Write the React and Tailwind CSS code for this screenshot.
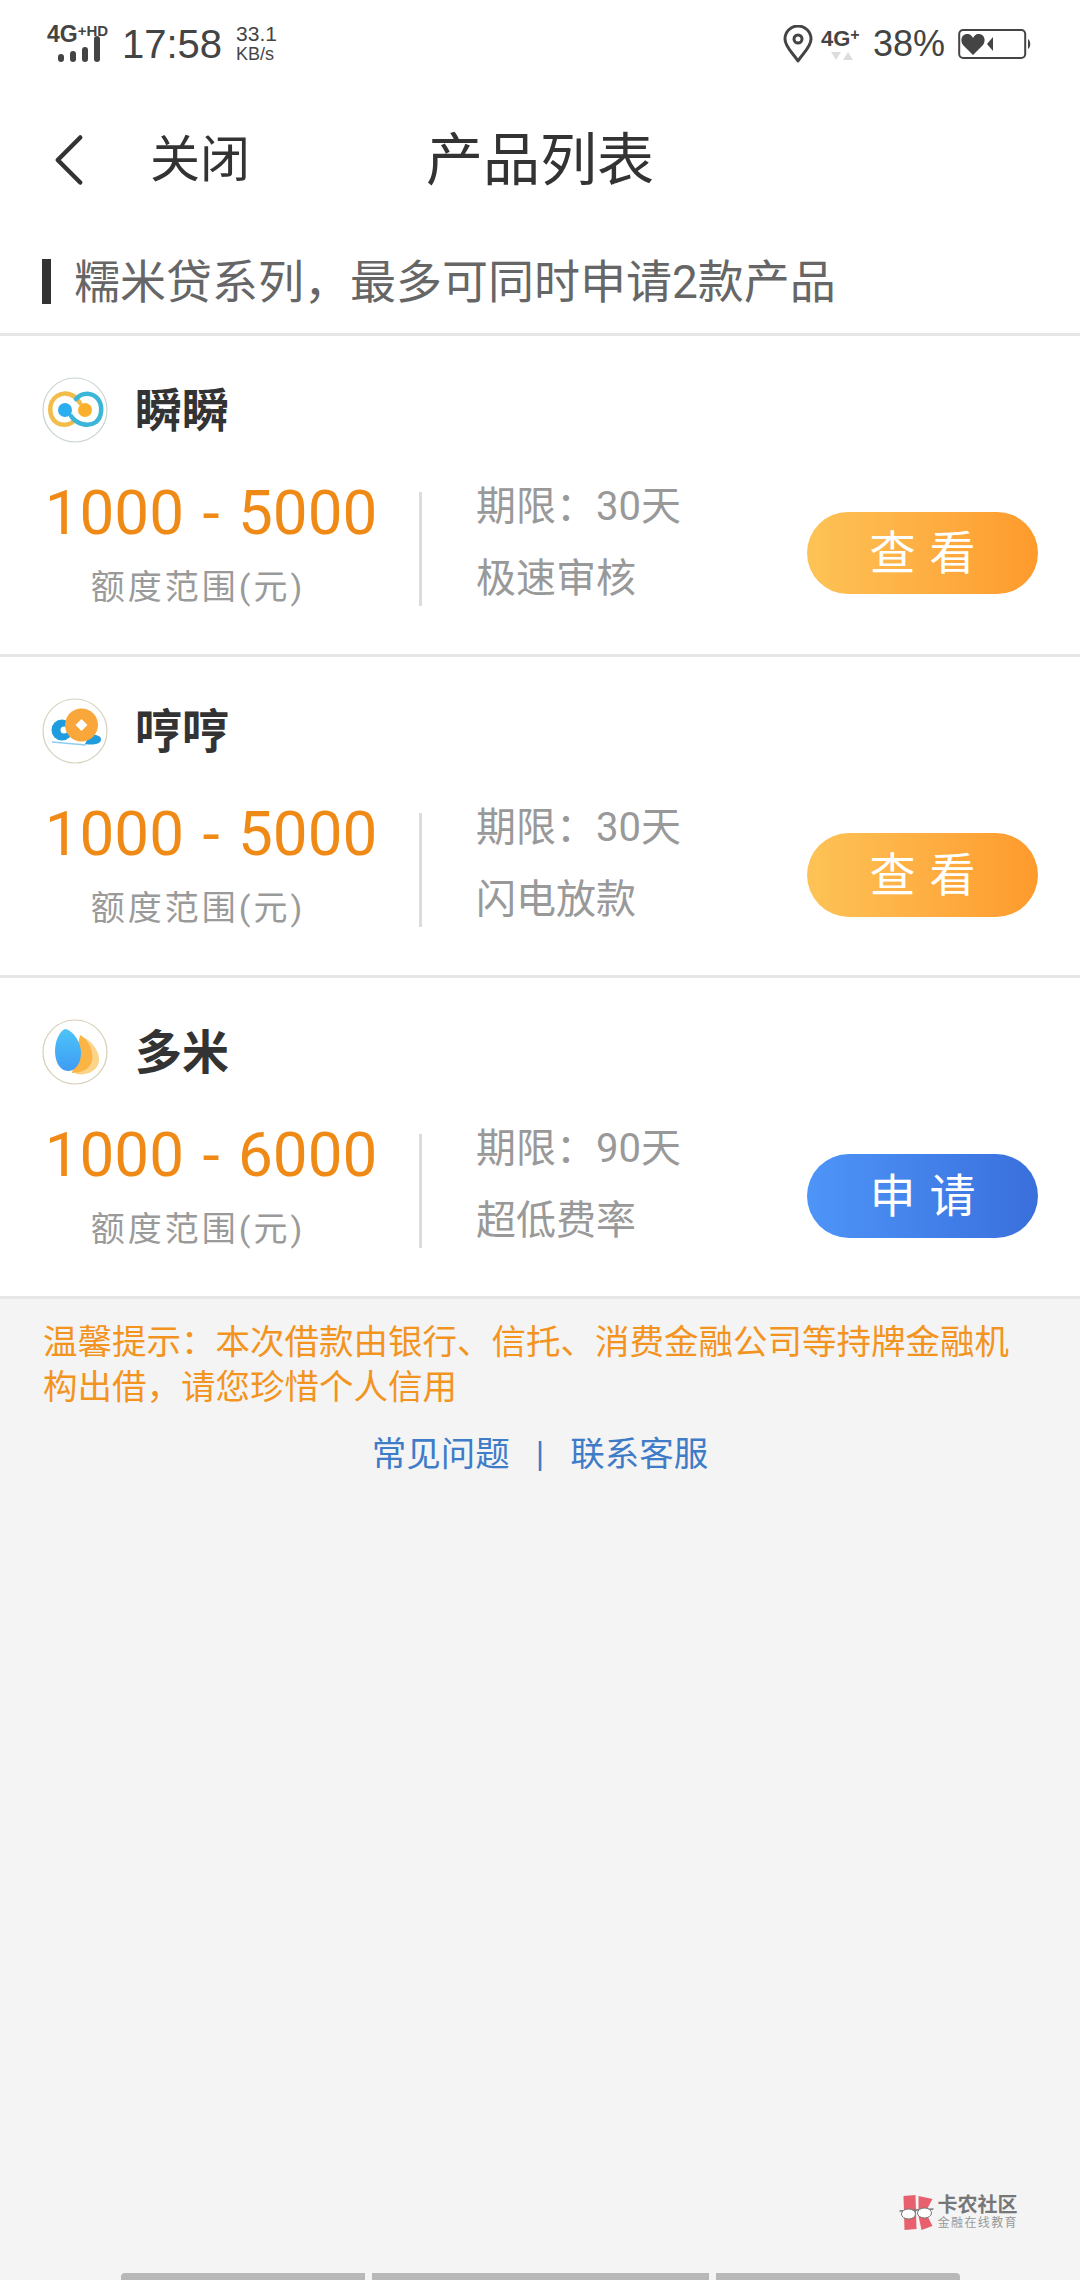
import { ChevronLeft } from 'lucide-react';

const cjk = { fontFamily: '"Roboto", "Noto Sans CJK SC", sans-serif' };

function InfinityIcon() {
    return (
        <svg width="66" height="66" viewBox="0 0 66 66">
            <circle cx="33" cy="33" r="32" fill="#fff" stroke="#c9d6cf" strokeWidth="1.2" />
            <path d="M38 26 C33 17 23 14 15 19 C6 25 6 40 15 46 C21 49 28 48 32 44" fill="none" stroke="#f2bd4b" strokeWidth="4.5" strokeLinecap="round" />
            <path d="M34 22 C40 15 50 15 56 22 C61 29 60 40 54 45 C47 50 35 48 29 39" fill="none" stroke="#3bb6d8" strokeWidth="4.5" strokeLinecap="round" />
            <circle cx="23" cy="33" r="7" fill="#2aaef0" />
            <circle cx="43" cy="33" r="7" fill="#fbb02d" />
        </svg>
    );
}

function CoinIcon() {
    return (
        <svg width="66" height="66" viewBox="0 0 66 66">
            <circle cx="33" cy="33" r="32" fill="#fff" stroke="#d6d2bf" strokeWidth="1.2" />
            <circle cx="20" cy="32" r="10.5" fill="#1f9be0" />
            <circle cx="22" cy="32" r="3.5" fill="#fff" />
            <path d="M47 38 C52 35 60 38 59 42 C58 47 49 47 43 46 Z" fill="#1f9be0" />
            <path d="M10 44 L44 47" stroke="#8fcdf0" strokeWidth="1.5" />
            <circle cx="39.5" cy="27" r="16.5" fill="#f9a63a" />
            <path d="M39.5 21 L45.5 27 L39.5 33 L33.5 27 Z" fill="#fff" />
        </svg>
    );
}

function SeedIcon() {
    return (
        <svg width="66" height="66" viewBox="0 0 66 66">
            <defs>
                <linearGradient id="seed" x1="0" y1="0" x2="0" y2="1">
                    <stop offset="0" stopColor="#4cc4f7" />
                    <stop offset="1" stopColor="#3f9cf5" />
                </linearGradient>
            </defs>
            <circle cx="33" cy="33" r="32" fill="#fff" stroke="#d8cfb8" strokeWidth="1.2" />
            <path d="M40 18 C48 20 58 32 57 42 C56 52 44 57 34 55 Z" fill="#fbd48a" />
            <path d="M38 16 C46 20 52 32 50 42 C48 50 40 54 30 54 Z" fill="#fbb545" />
            <path d="M23 10 C30 11 39 22 39 34 C39 46 32 52 26 52 C18 52 13 43 13 32 C13 21 18 12 23 10 Z" fill="url(#seed)" />
        </svg>
    );
}

function Pin() {
    return (
        <svg width="30" height="38" viewBox="0 0 30 38" fill="none" stroke="#444" strokeWidth="3">
            <path d="M15 36 C10 28 2 22 2 14 A13 13 0 0 1 28 14 C28 22 20 28 15 36 Z" strokeLinejoin="round" />
            <circle cx="15" cy="14" r="4" />
        </svg>
    );
}

function Battery() {
    return (
        <svg width="74" height="32" viewBox="0 0 74 32">
            <rect x="1.2" y="2" width="66" height="28" rx="4" fill="none" stroke="#444" strokeWidth="2" />
            <path d="M70 11 C73 13 73 19 70 21 Z" fill="#444" />
            <path d="M15 27 L5 17 C1 11 5 5 10 6 C12 6 14 8 15 10 C16 8 18 6 20 6 C25 5 29 11 25 17 Z" fill="#444" />
            <path d="M29 16 L35 9 V23 Z" fill="#444" />
        </svg>
    );
}

function Signal() {
    return (
        <div className="flex flex-col items-start w-[64px]">
            <div className="h-[17px] leading-[17px] text-[#444] font-bold whitespace-nowrap flex items-start" style={{ fontFamily: '"Liberation Sans", sans-serif' }}>
                <span className="text-[23px]">4G</span>
                <span className="text-[15px] leading-[10px]">+HD</span>
            </div>
            <div className="flex items-end gap-[6px] ml-[11px] h-[19px]">
                <span className="w-[6px] h-[8px] bg-[#444] rounded-full" />
                <span className="w-[6px] h-[11px] bg-[#444] rounded-full" />
                <span className="w-[6px] h-[15px] bg-[#444] rounded-full" />
                <span className="w-[6px] h-[26px] bg-[#444] rounded-full" />
            </div>
        </div>
    );
}

function StatusBar() {
    return (
        <div className="h-[88px] flex items-center justify-between pl-[47px] pr-[48px] text-[#444]" style={{ fontFamily: '"Liberation Sans", sans-serif' }}>
            <div className="flex items-center">
                <Signal />
                <span className="text-[40px] leading-none ml-[11px]">17:58</span>
                <div className="ml-[14px] flex flex-col gap-[3px] text-[21px] leading-[16px]">
                    <span>33.1</span>
                    <span className="text-[18px] leading-[18px]">KB/s</span>
                </div>
            </div>
            <div className="flex items-center">
                <Pin />
                <div className="ml-[8px] w-[40px] flex flex-col items-start">
                    <div className="font-bold text-[22px] leading-[20px] flex">4G<span className="text-[16px] leading-[12px]">+</span></div>
                    <div className="flex gap-[2px] ml-[10px] mt-[3px]">
                        <span className="w-0 h-0 border-l-[5px] border-r-[5px] border-t-[8px] border-l-transparent border-r-transparent border-t-[#ddd]" />
                        <span className="w-0 h-0 border-l-[5px] border-r-[5px] border-b-[8px] border-l-transparent border-r-transparent border-b-[#ddd]" />
                    </div>
                </div>
                <span className="text-[36px] leading-none ml-[12px] mr-[13px]">38%</span>
                <Battery />
            </div>
        </div>
    );
}

function ProductCard({ icon, name, amount, term, tag, button, blue, tall }) {
    return (
        <div className="h-[321px] bg-white border-b-[3px] border-[#e6e6e6] px-[42px] pt-[41px]">
            <div className="flex items-center h-[66px]">
                <div className="w-[66px] h-[66px]">{icon}</div>
                <span className="ml-[27px] text-[47px] leading-none font-bold text-[#333]">{name}</span>
            </div>
            <div className="flex mt-[9px]">
                <div className="w-[334px] ml-[2px] flex flex-col items-center pt-[26px]">
                    <span className="text-[62px] leading-[70px] text-[#f08a16] whitespace-nowrap [word-spacing:3px]">{amount}</span>
                    <span className="mt-[19px] mr-[26px] text-[34px] leading-[40px] text-[#9a9a9a] tracking-[3px] whitespace-nowrap">额度范围(元)</span>
                </div>
                <div className="w-[3px] h-[114px] mt-[40px] ml-[41px] bg-[#dcdcdc]" />
                <div className="ml-[54px] pt-[19px] text-[40px] leading-[72px] text-[#999] whitespace-nowrap">
                    <div>期限：{term}</div>
                    <div>{tag}</div>
                </div>
                <div className={`ml-auto mt-[60px] w-[231px] rounded-full flex items-center justify-center text-white text-[46px] tracking-[14px] pl-[14px] ${tall ? 'h-[84px]' : 'h-[82px]'} ${blue ? 'bg-gradient-to-r from-[#4e95f8] to-[#3a6fdc]' : 'bg-gradient-to-r from-[#fdc356] to-[#fe9a2c]'}`}>
                    {button}
                </div>
            </div>
        </div>
    );
}

function Watermark() {
    return (
        <div className="flex items-center justify-end pr-[62px]">
            <svg width="37" height="37" viewBox="0 0 36 37">
                <path d="M5 2 L17 1 L18 35 L6 36 Z" fill="#e8606e" />
                <path d="M20 2 L34 5 L27 18 L34 32 L23 36 L20 22 Z" fill="#e8606e" />
                <path d="M1 17 L35 15" stroke="#777" strokeWidth="1.5" />
                <ellipse cx="10" cy="20" rx="7" ry="5" fill="#fff" stroke="#777" strokeWidth="1" />
                <ellipse cx="26" cy="19" rx="7" ry="5" fill="#fff" stroke="#777" strokeWidth="1" />
            </svg>
            <div className="ml-[3px] flex flex-col text-[#777]">
                <span className="text-[20px] leading-[22px] font-bold whitespace-nowrap">卡农社区</span>
                <span className="text-[12px] leading-[15px] tracking-[1.4px] text-[#999] whitespace-nowrap">金融在线教育</span>
            </div>
        </div>
    );
}

export default function App() {
    return (
        <div className="w-[1080px] h-[2280px] bg-[#f4f4f4] flex flex-col overflow-hidden" style={cjk}>
            <div className="bg-white">
                <StatusBar />
                <div className="h-[144px] flex items-center">
                    <ChevronLeft size={90} strokeWidth={1.2} className="ml-[24px] text-[#333]" />
                    <span className="ml-[36px] text-[50px] leading-none text-[#333]">关闭</span>
                    <span className="ml-[176px] text-[57px] leading-none text-[#333]">产品列表</span>
                </div>
                <div className="h-[104px] border-b-[3px] border-[#e6e6e6] flex items-center pl-[42px] pb-[2px]">
                    <span className="w-[9px] h-[45px] bg-[#333]" />
                    <span className="ml-[23px] text-[46px] leading-none text-[#666] whitespace-nowrap">糯米贷系列，最多可同时申请2款产品</span>
                </div>
            </div>
            <ProductCard icon={<InfinityIcon />} name="瞬瞬" amount="1000 - 5000" term="30天" tag="极速审核" button="查看" />
            <ProductCard icon={<CoinIcon />} name="哼哼" amount="1000 - 5000" term="30天" tag="闪电放款" button="查看" tall />
            <ProductCard icon={<SeedIcon />} name="多米" amount="1000 - 6000" term="90天" tag="超低费率" button="申请" blue tall />
            <div className="px-[43px] pt-[21px] text-[34.5px] leading-[45px] text-[#f2941f]">
                温馨提示：本次借款由银行、信托、消费金融公司等持牌金融机构出借，请您珍惜个人信用
            </div>
            <div className="mt-[22px] flex justify-center items-center text-[34.5px] leading-[45px] text-[#3f7cc8]">
                <span>常见问题</span>
                <span className="mx-[26px]">|</span>
                <span>联系客服</span>
            </div>
            <div className="flex-1 flex flex-col justify-end">
                <Watermark />
                <div className="mt-[42px] h-[7px] flex justify-center gap-[7px]">
                    <span className="w-[244px] bg-[#b8b8b8] rounded-tl-[4px]" />
                    <span className="w-[337px] bg-[#b8b8b8]" />
                    <span className="w-[244px] bg-[#b8b8b8] rounded-tr-[4px]" />
                </div>
            </div>
        </div>
    );
}
